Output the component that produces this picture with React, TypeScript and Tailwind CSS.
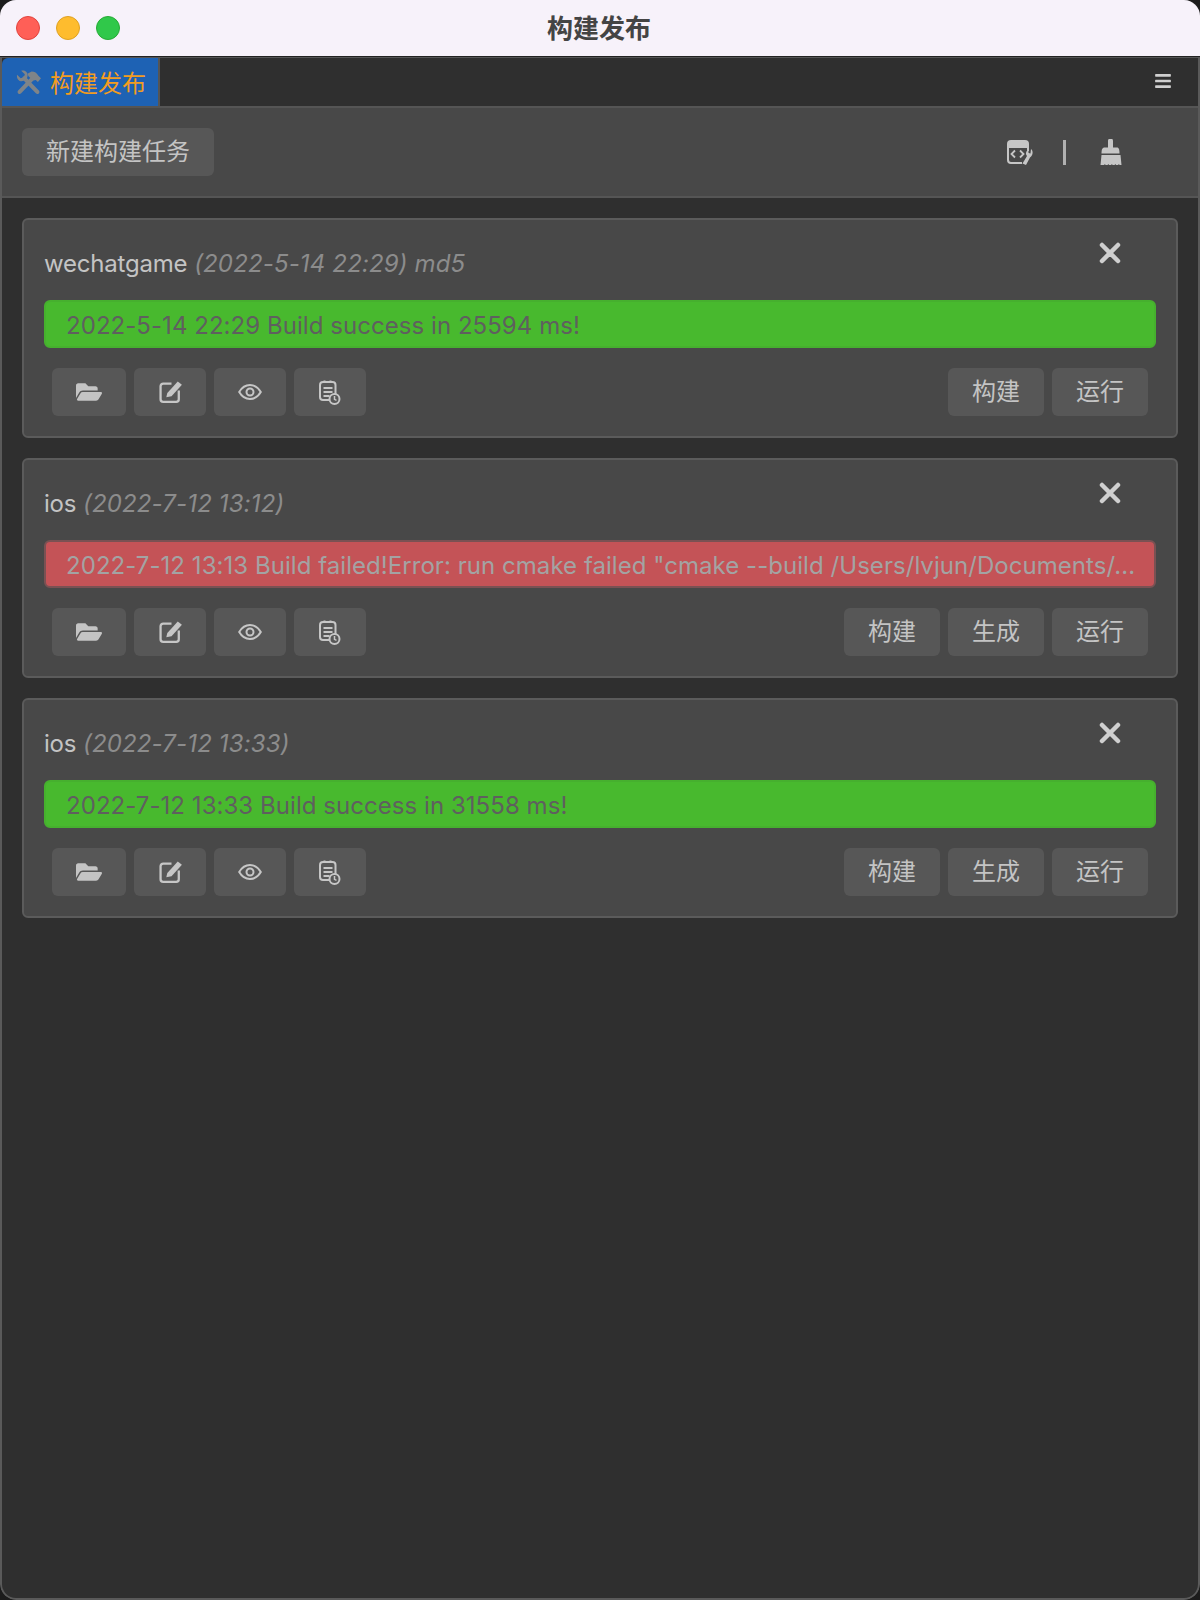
import React from "react";
import { FaFolderOpen, FaBars } from "react-icons/fa";

const font = { fontFamily: '"Inter","Noto Sans CJK SC",sans-serif' };
const C = "#c6c6c6";

function TabIcon() {
  return (
    <svg width="25" height="25" viewBox="0 0 24 24" className="shrink-0">
      <path d="M8 8 20.500 21" stroke="#7f8488" strokeWidth="4" strokeLinecap="round" fill="none" />
      <path d="M1 4.500 4.500 8l3-1 1-3L5 .8C8-.5 12 2 11 6.500c-.5 3-4 5-7.500 4C1.500 9.500.5 7 1 4.500z" fill="#7f8488" />
      <path d="M3.500 21 15 9" stroke="#7f8488" strokeWidth="4" strokeLinecap="round" fill="none" />
      <path d="M11 3.500 15 1.500c3 0 5 1.500 6.500 4L24 8l-3 3.500-2-2-2.500.5L12 6z" fill="#7f8488" />
    </svg>
  );
}

function CodeWrench() {
  return (
    <svg width="26" height="25" viewBox="0 0 26 25" fill="none">
      <path d="M15 23H4a3 3 0 0 1-3-3V6" stroke={C} strokeWidth="2" />
      <path d="M21 11V6" stroke={C} strokeWidth="2" />
      <path d="M0 8V4a4 4 0 0 1 4-4h14a4 4 0 0 1 4 4v4z" fill={C} />
      <path d="M8 10.500 4.500 14 8 17.500M13 10.500l3.500 3.500-3.500 3.500" stroke={C} strokeWidth="1.800" />
      <path d="M15.500 23.500 20 16c-2-2-1-5 1.500-6.500V13l2 .5.500-4.500c2.500 2 2 6.500-1 8.500L19 25z" fill={C} />
    </svg>
  );
}

function Broom() {
  return (
    <svg width="22" height="26" viewBox="0 0 22 26" fill={C}>
      <path d="M8 2a2.500 2.500 0 0 1 5 0v7H8z" />
      <path d="M5 8.500h12c1.500 0 2.500 1.500 2.500 6h-18c0-4.500 1-6 3.500-6z" />
      <path d="M1.500 16h19l1 10h-2l-.5-1-1 1h-2l-.5-1-1 1h-2l-.5-1-1 1h-2l-.5-1-1 1h-2l-.5-1-1 1H.5z" />
    </svg>
  );
}

function EditIcon() {
  return (
    <svg width="25" height="23" viewBox="0 0 24 22" fill="none" className="ml-[2px]">
      <path d="M12 2.500H4A2.500 2.500 0 0 0 1.500 5v12.500A2.500 2.500 0 0 0 4 20h12.500a2.500 2.500 0 0 0 2.500-2.500V9" stroke={C} strokeWidth="2.200" />
      <path d="M7 15.500l1-4L18 .5l4 3L12 14.500z" fill={C} />
    </svg>
  );
}

function EyeIcon() {
  return (
    <svg width="24" height="16" viewBox="0 0 24 16" fill="none" stroke={C} strokeWidth="2">
      <path d="M1.200 8C4 3.200 7.500 1 12 1s8 2.200 10.800 7C20 12.800 16.500 15 12 15S4 12.800 1.200 8z" />
      <circle cx="12" cy="8" r="3.500" />
    </svg>
  );
}

function NoteClock() {
  return (
    <svg width="22" height="25" viewBox="0 0 22 25" fill="none" stroke={C} strokeWidth="2">
      <rect x="1" y="2" width="15.500" height="18" rx="3" />
      <path d="M5.500 0.500v2.500M11.500 0.500v2.500" />
      <path d="M4.500 8h9M4.500 12h9M4.500 16h6" />
      <circle cx="15.500" cy="19" r="5" fill="#575757" />
      <path d="M15.500 16v3.300l2 1" strokeWidth="1.500" />
    </svg>
  );
}

function CloseIcon() {
  return (
    <svg width="22" height="22" viewBox="0 0 22 22" stroke="#cfcfcf" strokeWidth="4.500" strokeLinecap="round">
      <path d="M3 3l16 16M19 3 3 19" />
    </svg>
  );
}

function Btn({ children, className = "" }: { children: React.ReactNode; className?: string }) {
  return (
    <div className={`h-12 flex items-center justify-center rounded-[6px] bg-[#575757] text-[#c4c4c4] text-[24px] ${className}`}>
      {children}
    </div>
  );
}

function Card({
  name,
  time,
  extra,
  status,
  failed,
  generate,
}: {
  name: string;
  time: string;
  extra?: string;
  status: string;
  failed?: boolean;
  generate?: boolean;
}) {
  return (
    <div className="relative h-[220px] rounded-[6px] border-2 border-[#5b5b5b] bg-[#484848] px-5 pt-[27px]">
      <div className="h-[34px] leading-[34px] text-[24px] text-[#c4c4c4] whitespace-nowrap">
        <span className="tracking-[-0.2px]">{name}</span>{" "}
        <span className="italic text-[#8c8c8c] tracking-[0.15px]">({time}){extra ? ` ${extra}` : ""}</span>
      </div>
      <div className="absolute right-[55px] top-[22px]"><CloseIcon /></div>
      <div
        className={`mt-[19px] h-12 leading-[48px] rounded-[6px] border-2 pl-5 pr-2 text-[24px] tracking-[0.05px] whitespace-nowrap ${
          failed
            ? "bg-[#c45357] border-[#7a5153] text-[#a3a3a3]"
            : "bg-[#48b92e] border-[#46b02e] text-[#5f5f5f]"
        }`}
      >
        {status}
      </div>
      <div className="mt-5 px-2 flex gap-2">
        <Btn className="w-[74px]"><FaFolderOpen size={26} /></Btn>
        <Btn className="w-[72px]"><EditIcon /></Btn>
        <Btn className="w-[72px]"><EyeIcon /></Btn>
        <Btn className="w-[72px]"><NoteClock /></Btn>
        <div className="flex-1" />
        <Btn className="w-[96px]">构建</Btn>
        {generate && <Btn className="w-[96px]">生成</Btn>}
        <Btn className="w-[96px]">运行</Btn>
      </div>
    </div>
  );
}

export default function App() {
  return (
    <div className="w-[1200px] h-[1600px] bg-[#1c1c1c] overflow-hidden" style={font}>
      <div className="h-full rounded-[16px] overflow-hidden flex flex-col">
        <div className="h-[57px] shrink-0 bg-[#f7f2fa] flex items-center relative border-b border-[#222]">
          <div className="flex gap-4 pl-4">
            <div className="w-6 h-6 rounded-full bg-[#ff5f57] border border-[#e0443e]" />
            <div className="w-6 h-6 rounded-full bg-[#febc2e] border border-[#dea123]" />
            <div className="w-6 h-6 rounded-full bg-[#30c84a] border border-[#27aa35]" />
          </div>
          <div className="flex-1 text-center text-[26px] font-semibold text-[#444] mr-[122px]">构建发布</div>
        </div>
        <div className="flex-1 flex flex-col bg-[#2f2f2f] border-2 border-t-0 border-[#5a5a5a] rounded-b-[16px]">
          <div className="h-[51px] shrink-0 flex items-stretch border-t border-[#555] border-b-2 border-b-[#555]">
            <div className="w-[158px] bg-[#1e62b4] flex items-center pl-[14px] gap-[9px] text-[24px] text-[#f39c1f] border-r-2 border-[#555] rounded-tl-[6px]">
              <TabIcon />
              <span className="pt-[3px]">构建发布</span>
            </div>
            <div className="flex-1" />
            <div className="pr-[26px] pb-[3px] flex items-center"><FaBars size={18} className="text-[#cfcfcf]" /></div>
          </div>
          <div className="h-[90px] shrink-0 bg-[#484848] border-b-2 border-[#555] flex items-center pl-5 pr-[76px]">
            <Btn className="w-[192px]">新建构建任务</Btn>
            <div className="flex-1" />
            <div className="flex items-center">
              <CodeWrench />
              <span className="ml-[30px] mr-[34px] w-[3px] h-[25px] bg-[#b0b0b0]" />
              <Broom />
            </div>
          </div>
          <div className="flex flex-col gap-5 px-5 pt-5">
            <Card name="wechatgame" time="2022-5-14 22:29" extra="md5" status="2022-5-14 22:29 Build success in 25594 ms!" />
            <Card name="ios" time="2022-7-12 13:12" failed generate status={'2022-7-12 13:13 Build failed!Error: run cmake failed "cmake --build /Users/lvjun/Documents/...'} />
            <Card name="ios" time="2022-7-12 13:33" generate status="2022-7-12 13:33 Build success in 31558 ms!" />
          </div>
        </div>
      </div>
    </div>
  );
}
